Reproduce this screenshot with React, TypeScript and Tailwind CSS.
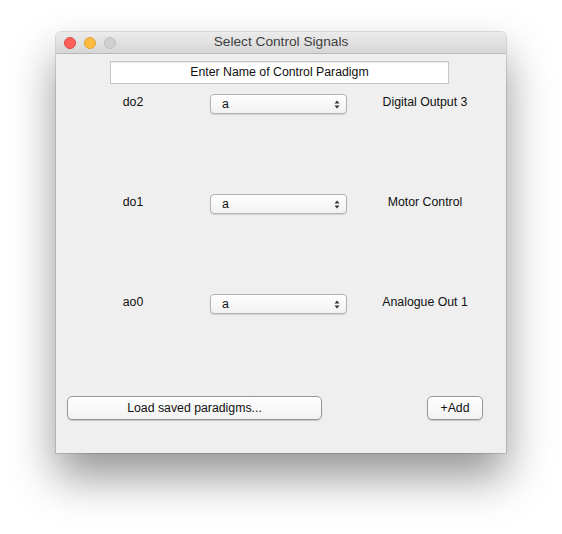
import React from "react";

const rows = [
  { left: "do2", right: "Digital Output 3" },
  { left: "do1", right: "Motor Control" },
  { left: "ao0", right: "Analogue Out 1" },
];

function UpDown() {
  return (
    <svg width="6" height="9" viewBox="0 0 6 9" className="block">
      <path d="M0.5 3.5 L3 0.5 L5.5 3.5 Z" fill="#333" />
      <path d="M0.5 5.5 L3 8.5 L5.5 5.5 Z" fill="#333" />
    </svg>
  );
}

export default function App() {
  return (
    <div
      className="w-[562px] h-[534px] bg-white pt-[32px] pl-[56px]"
      style={{ fontFamily: '"Liberation Sans", Arial, sans-serif' }}
    >
      <div className="w-[450px] h-[421px] rounded-t-[5px] bg-[#efefef] shadow-[0_0_0_1px_rgba(0,0,0,0.12),0_24px_45px_rgba(0,0,0,0.42)] flex flex-col overflow-hidden">
        {/* Title bar */}
        <div className="h-[22px] shrink-0 bg-gradient-to-b from-[#ececec] to-[#d6d6d6] border-b border-[#b9b9b9] flex items-center relative">
          <div className="flex items-center gap-[8px] pl-[8px]">
            <span className="w-[12px] h-[12px] rounded-full bg-[#fc605b] border border-[#de4a44]" />
            <span className="w-[12px] h-[12px] rounded-full bg-[#fdbc40] border border-[#dea235]" />
            <span className="w-[12px] h-[12px] rounded-full bg-[#d0d0d0] border border-[#bdbdbd]" />
          </div>
          <div className="absolute inset-0 flex items-center justify-center text-[13.7px] text-[#3f3f3f]">
            Select Control Signals
          </div>
        </div>

        {/* Name field */}
        <div className="pl-[54px] pt-[7px]">
          <div className="w-[339px] h-[23px] bg-white border border-[#c6c6c6] shadow-[inset_0_1px_1px_rgba(0,0,0,0.08)] flex items-center justify-center text-[12.3px] text-[#111]">
            Enter Name of Control Paradigm
          </div>
        </div>

        {/* Rows */}
        <div className="flex flex-col pt-[10px] gap-[80px]">
          {rows.map((r) => (
            <div key={r.left} className="flex items-center h-[20px]">
              <div className="w-[154px] text-center text-[12.3px] text-[#111] -mt-[3px]">{r.left}</div>
              <div className="w-[137px] h-[20px] rounded-[4px] border border-[#b3b3b3] bg-gradient-to-b from-white to-[#f1f1f1] shadow-[0_1px_1px_rgba(0,0,0,0.12)] flex items-center justify-between pl-[11px] pr-[6px] text-[12.3px] text-[#111]">
                <span className="mt-[1px]">a</span>
                <UpDown />
              </div>
              <div className="w-[156px] text-center text-[12.3px] text-[#111] -mt-[4px]">{r.right}</div>
            </div>
          ))}
        </div>

        {/* Buttons */}
        <div className="flex items-center pt-[82px] pl-[11px]">
          <div className="w-[255px] h-[24px] rounded-[5px] border border-[#979797] bg-gradient-to-b from-white to-[#f2f2f2] shadow-[0_1px_1px_rgba(0,0,0,0.18)] flex items-center justify-center text-[12.3px] text-[#111]">
            Load saved paradigms...
          </div>
          <div className="ml-[105px] w-[56px] h-[24px] rounded-[5px] border border-[#979797] bg-gradient-to-b from-white to-[#f2f2f2] shadow-[0_1px_1px_rgba(0,0,0,0.18)] flex items-center justify-center text-[12.3px] text-[#111]">
            +Add
          </div>
        </div>
      </div>
    </div>
  );
}
